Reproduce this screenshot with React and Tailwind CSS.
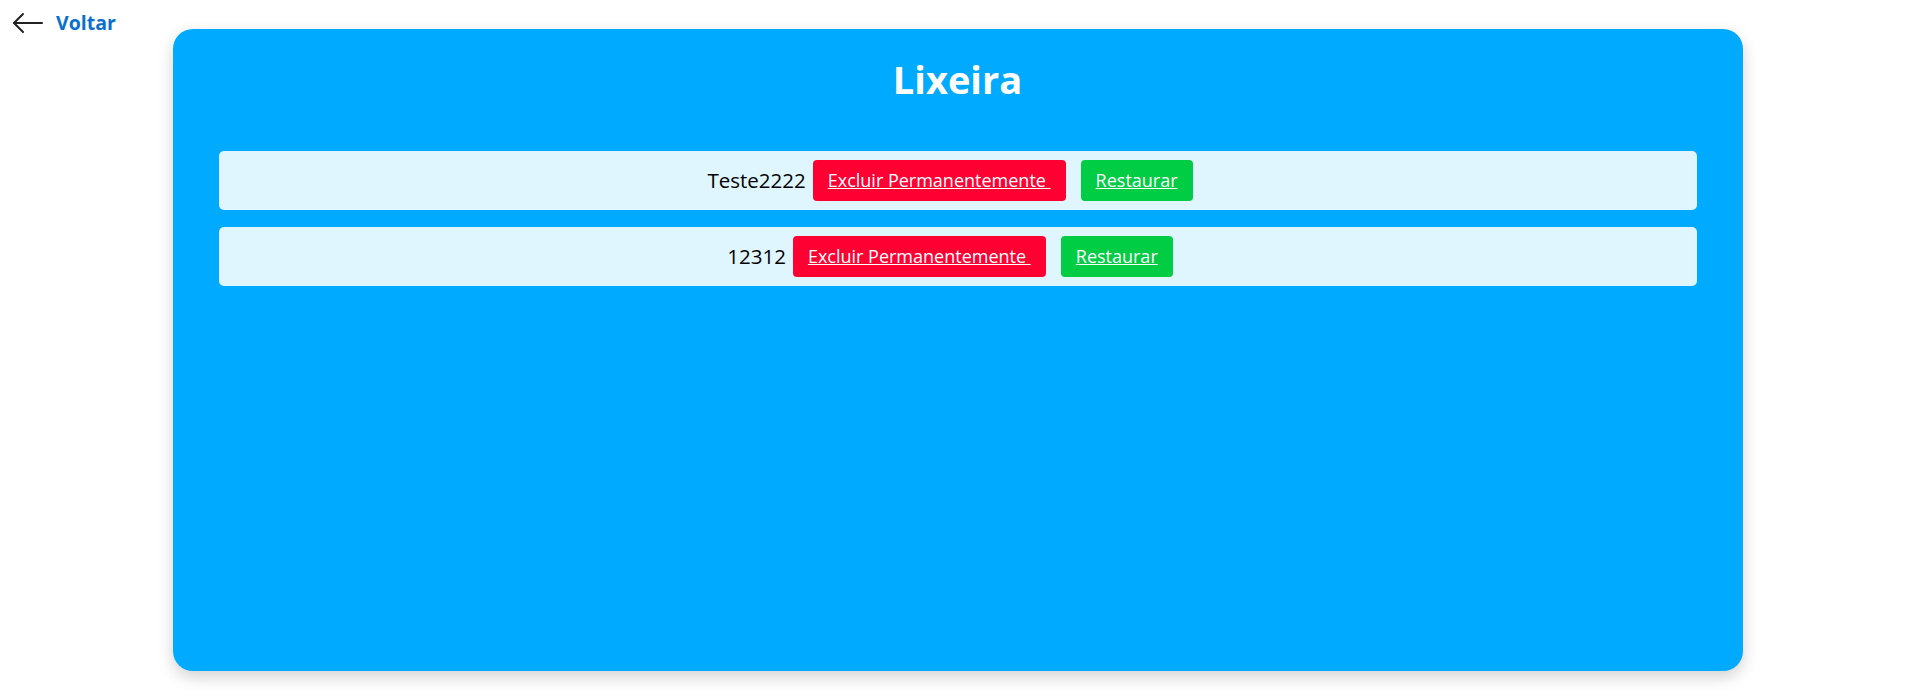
import React from 'react';

const itens = [
  { id: 1, nome: 'Teste2222' },
  { id: 2, nome: '12312' },
];

const ItemLixeira = ({ nome }) => (
  <div className="flex items-center justify-center h-[59px] pr-[15px] rounded-[5px] bg-[#e0f6ff]">
    <span className="text-[20.5px] text-black mr-[7px]">{nome}</span>
    <button className="h-[41px] px-[15px] rounded-[4px] bg-[#ff0033] text-white text-[18px] underline">
      Excluir Permanentemente&nbsp;
    </button>
    <button className="h-[41px] px-[15px] ml-[15px] rounded-[4px] bg-[#00cc44] text-white text-[18px] underline">
      Restaurar
    </button>
  </div>
);

export default function App() {
  return (
    <div
      className="min-h-[699px] bg-white grid grid-cols-[1fr_1570px_1fr]"
      style={{ fontFamily: '"Open Sans", "Noto Sans", sans-serif' }}
    >
      {/* Voltar */}
      <div className="pt-[12px] pl-[12px]">
        <a href="#" className="flex items-center gap-[12px] text-[#0b6fd0] font-bold text-[19.5px] leading-none">
          <svg width="32" height="22" viewBox="0 0 32 22" fill="none" stroke="#222" strokeWidth="2" strokeLinecap="round" strokeLinejoin="round">
            <path d="M30 11H2" />
            <path d="M11 2L2 11l9 9" />
          </svg>
          Voltar
        </a>
      </div>

      {/* Card */}
      <div className="mt-[29px] h-[642px] rounded-[20px] bg-[#00aaff] shadow-[0_6px_16px_rgba(0,0,0,0.18)] px-[46px]">
        <h1 className="text-center text-white font-bold text-[38px] leading-none pt-[31px] mb-[53px]">
          Lixeira
        </h1>
        <div className="flex flex-col gap-[17px]">
          {itens.map(item => (
            <ItemLixeira key={item.id} nome={item.nome} />
          ))}
        </div>
      </div>

      <div />
    </div>
  );
}
